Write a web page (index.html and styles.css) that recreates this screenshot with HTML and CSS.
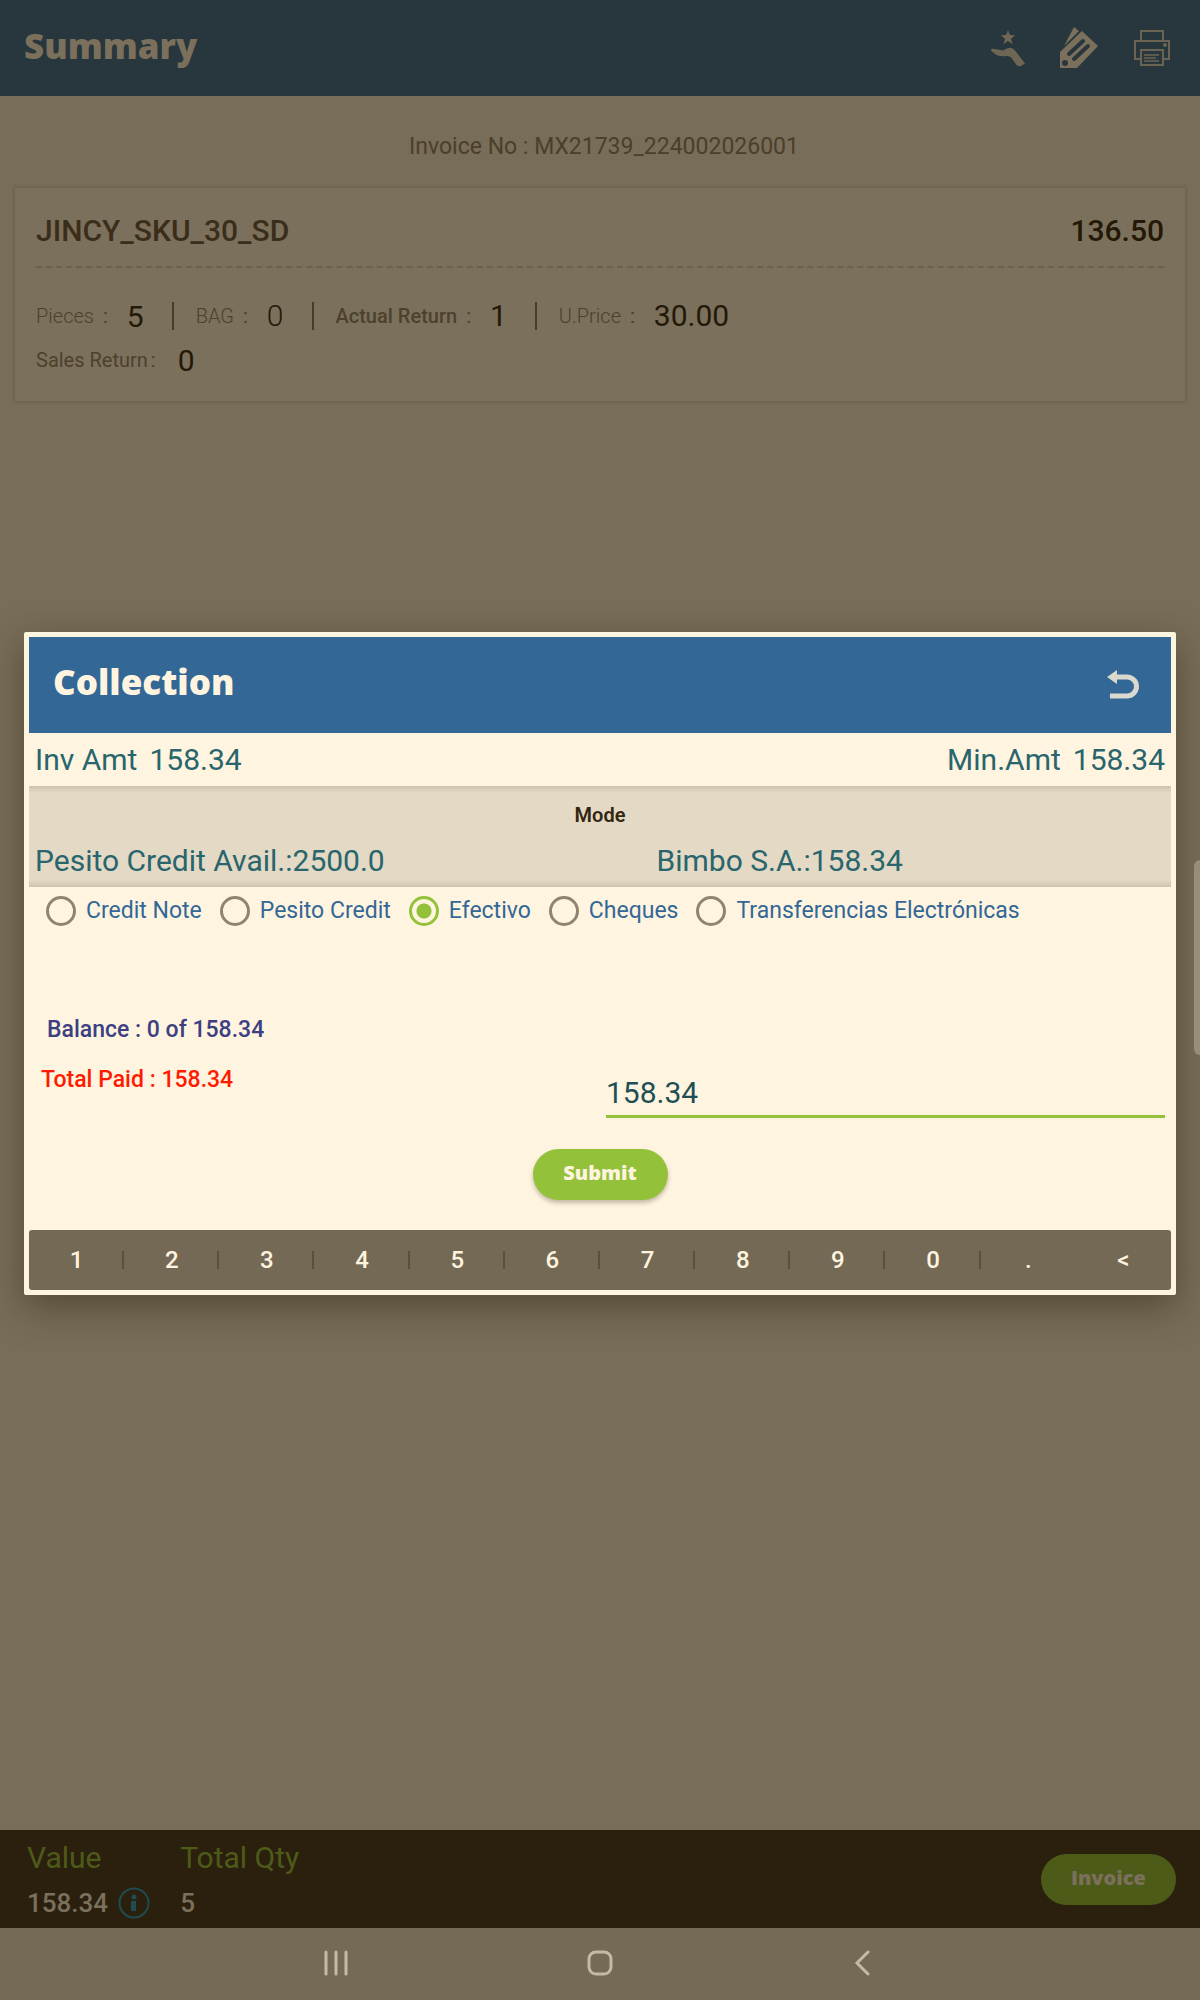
FILE: index.html
```html
<!DOCTYPE html>
<html lang="en">
<head>
<meta charset="utf-8">
<meta name="viewport" content="width=device-width, initial-scale=1">
<title>Summary</title>
<link rel="stylesheet" href="styles.css">
</head>
<body>
<div class="app">
  <header class="topbar">
    <h1 class="brand-title">Summary</h1>
    <div class="topbar-actions">
      <button class="icon-button" aria-label="Offers">
        <svg width="36" height="42" viewBox="2 0 36 42" fill="#6f6653"><path d="M19 3l2 5 5 .3-4 3.500 1.500 5.200-4.500-3-4.500 3 1.500-5.200-4-3.500 5-.3z"/><path d="M2 23q0-2 4-1l8 1.500 4-2q5-2 8 2l10 13-5 3-3-1-6-8q-2-2-5-1.500-8 1-12-3-3-1-3-3z"/></svg>
      </button>
      <button class="icon-button" aria-label="Price tags">
        <svg width="42" height="44" viewBox="0 0 42 44"><path d="M5 20L15 1l5 4-5 5z" fill="#7b705b"/><path d="M1 26L23 5l16 15-21 22H1z" fill="#7b705b"/><circle cx="6" cy="37" r="3" fill="#28363d"/><path d="M10 28L24 15M15 33L29 20" stroke="#28363d" stroke-width="4" stroke-linecap="round"/></svg>
      </button>
      <button class="icon-button" aria-label="Print">
        <svg width="38" height="38" viewBox="0 0 38 38" fill="none" stroke="#6c6452" stroke-width="2"><path d="M8 11V2h22v9M8 30H2V12h34v18h-6"/><path d="M8 21h22v15H8z"/><path d="M11 26h15M11 29h12M11 32h15" stroke-width="1.500"/><circle cx="32" cy="16" r="1"/></svg>
      </button>
    </div>
  </header>

  <main class="summary">
    <p class="invoice-no">Invoice No : MX21739_224002026001</p>
    <section class="item">
      <div class="item-head"><h2 class="item-name">JINCY_SKU_30_SD</h2><strong class="item-total">136.50</strong></div>
      <div class="facts">
        <span class="fact"><span class="fact-label thin">Pieces</span><span class="colon">:</span><span class="fact-value">5</span></span>
        <span class="fact"><span class="fact-label thin">BAG</span><span class="colon">:</span><span class="fact-value light">0</span></span>
        <span class="fact"><span class="fact-label medium">Actual Return</span><span class="colon">:</span><span class="fact-value">1</span></span>
        <span class="fact"><span class="fact-label thin">U.Price</span><span class="colon">:</span><span class="fact-value">30.00</span></span>
      </div>
      <div class="facts">
        <span class="fact tight"><span class="fact-label">Sales Return</span><span class="colon">:</span><span class="fact-value">0</span></span>
      </div>
    </section>
  </main>

  <footer class="totals">
    <div class="total">
      <span class="total-label">Value</span>
      <span class="total-value">158.34
        <svg width="32" height="32" viewBox="0 0 32 32"><circle cx="16" cy="16" r="14.500" fill="none" stroke="#1f4b52" stroke-width="2"/><circle cx="16" cy="10" r="2.500" fill="#1f4b52"/><path d="M13 14h5v10h-5z" fill="#1f4b52"/></svg>
      </span>
    </div>
    <div class="total"><span class="total-label">Total Qty</span><span class="total-value">5</span></div>
    <button class="pill pill-dim">Invoice</button>
  </footer>

  <div class="overlay">
    <section class="dialog" role="dialog" aria-labelledby="dialog-title">
      <header class="dialog-head">
        <h2 class="brand-title" id="dialog-title">Collection</h2>
        <button class="icon-button" aria-label="Back">
          <svg width="34" height="32" viewBox="0 0 34 32"><path d="M8 8h12a9 9 0 0 1 0 19H3" fill="none" stroke="#d9d9d0" stroke-width="5"/><path d="M0 8l10-7v14z" fill="#d9d9d0"/></svg>
        </button>
      </header>
      <div class="amounts">
        <span class="amount"><span>Inv Amt</span><span>158.34</span></span>
        <span class="amount"><span>Min.Amt</span><span>158.34</span></span>
      </div>
      <div class="mode">
        <h3 class="mode-title">Mode</h3>
        <div class="credits"><span>Pesito Credit Avail.:2500.0</span><span>Bimbo S.A.:158.34</span></div>
      </div>
      <div class="options">
        <label class="option"><input type="radio" name="mode">Credit Note</label>
        <label class="option"><input type="radio" name="mode">Pesito Credit</label>
        <label class="option"><input type="radio" name="mode" checked>Efectivo</label>
        <label class="option"><input type="radio" name="mode">Cheques</label>
        <label class="option"><input type="radio" name="mode">Transferencias Electrónicas</label>
      </div>
      <div class="payment">
        <div class="status"><span class="balance">Balance : 0 of 158.34</span><span class="paid">Total Paid : 158.34</span></div>
        <input class="paid-input" type="text" value="158.34" aria-label="Amount">
      </div>
      <button class="pill submit">Submit</button>
      <div class="keypad">
        <button class="key">1</button><button class="key">2</button><button class="key">3</button><button class="key">4</button><button class="key">5</button><button class="key">6</button><button class="key">7</button><button class="key">8</button><button class="key">9</button><button class="key">0</button><button class="key">.</button><button class="key">&lt;</button>
      </div>
    </section>
    <div class="edge-handle"></div>
  </div>
</div>

<nav class="sysnav">
  <button class="nav-button" aria-label="Recents"><svg width="26" height="26" viewBox="0 0 26 26" stroke="#c6baa3" stroke-width="3" stroke-linecap="round"><path d="M3 2v22M13 2v22M23 2v22"/></svg></button>
  <button class="nav-button" aria-label="Home"><svg width="26" height="26" viewBox="0 0 26 26" fill="none" stroke="#c6baa3" stroke-width="3"><rect x="2" y="2" width="22" height="22" rx="7"/></svg></button>
  <button class="nav-button" aria-label="Back"><svg width="26" height="26" viewBox="0 0 26 26" fill="none" stroke="#c6baa3" stroke-width="3" stroke-linecap="round"><path d="M17 2L6 13l11 11"/></svg></button>
</nav>
</body>
</html>
```
FILE: styles.css
```css
* { box-sizing: border-box; }

body {
  display: flex;
  flex-direction: column;
  min-height: 100vh;
  margin: 0;
  background: #786d58;
  font-family: Roboto, "Liberation Sans", sans-serif;
  font-size: 20px;
}

h1, h2, h3, p { margin: 0; }

button {
  padding: 0;
  border: 0;
  background: none;
  font: inherit;
  cursor: pointer;
}

svg { display: block; }

.app {
  position: relative;
  display: flex;
  flex: 1;
  flex-direction: column;
}

.brand-title {
  padding-bottom: 5px;
  font-family: "Open Sans", "Noto Sans", sans-serif;
  font-size: 35px;
  font-weight: 800;
  line-height: 48px;
}

.topbar {
  display: flex;
  align-items: center;
  justify-content: space-between;
  height: 96px;
  padding: 0 29px 0 24px;
  background: #28363d;
  color: #7b705b;
}

.topbar-actions {
  display: flex;
  align-items: center;
  gap: 32px;
}

.summary {
  flex: 1;
  padding: 36px 14px;
}

.invoice-no {
  padding-left: 8px;
  color: #4b3f2a;
  font-size: 23px;
  line-height: 30px;
  text-align: center;
}

.item {
  margin-top: 25px;
  padding: 22px 21px 19px;
  border: 1px solid #6f644f;
  background: #7b705b;
  box-shadow: 0 0 3px #6b604b;
}

.item-head {
  display: flex;
  justify-content: space-between;
  padding-bottom: 14px;
  border-bottom: 2px dashed #6c614c;
  margin-bottom: 26px;
  font-size: 30px;
  line-height: 42px;
}

.item-name {
  color: #3a2d19;
  font-size: inherit;
  font-weight: 500;
}

.item-total {
  color: #241807;
  font-weight: 500;
}

.facts {
  display: flex;
  align-items: center;
  height: 44px;
}

.fact {
  display: flex;
  align-items: center;
}

.fact + .fact {
  margin-left: 28px;
  padding-left: 22px;
  border-left: 2px solid #4a3d28;
  line-height: 28px;
}

.fact-label, .colon { color: #4d412c; }
.thin { font-weight: 300; }
.medium { font-weight: 500; }
.colon { margin: 0 19px 0 9px; }
.tight .colon { margin: 0 22px 0 3px; }

.fact-value {
  color: #241807;
  font-size: 30px;
}

.fact-value.light { font-weight: 300; }

.totals {
  display: flex;
  align-items: center;
  gap: 30px;
  height: 98px;
  padding: 0 24px 0 27px;
  background: #2b200e;
}

.total-label {
  display: block;
  color: #4d5b18;
  font-size: 30px;
  line-height: 48px;
}

.total-value {
  display: flex;
  align-items: center;
  gap: 10px;
  height: 42px;
  color: #7b705b;
  font-size: 26px;
  font-weight: 500;
}

.pill {
  min-width: 135px;
  height: 51px;
  padding-bottom: 4px;
  border-radius: 26px;
  background: #93c13a;
  color: #fff4e0;
  font-family: "Open Sans", "Noto Sans", sans-serif;
  font-size: 20px;
  font-weight: 800;
}

.pill-dim {
  margin-left: auto;
  background: #4d5b18;
  color: #7b705b;
}

.overlay {
  position: absolute;
  inset: 0;
  display: flex;
  align-items: center;
  padding: 0 24px 2px;
}

.dialog {
  display: flex;
  flex: 1;
  flex-direction: column;
  padding: 5px;
  border-radius: 2px;
  background: #fff4e0;
  box-shadow: 0 12px 36px rgba(50, 38, 15, .5);
}

.dialog-head {
  display: flex;
  align-items: center;
  justify-content: space-between;
  height: 96px;
  padding: 0 30px 0 24px;
  background: #336796;
  color: #fff4e0;
}

.amounts {
  display: flex;
  justify-content: space-between;
  padding: 0 6px;
  color: #28656c;
  font-size: 30px;
  line-height: 53px;
}

.amount {
  display: flex;
  gap: 12px;
}

.mode {
  padding: 13px 6px 0;
  background:
    linear-gradient(#cec2ad, #e3d9c5) top / 100% 7px no-repeat,
    linear-gradient(#e3d9c5, #cec2ad) bottom / 100% 7px no-repeat,
    #e3d9c5;
}

.mode-title {
  margin-bottom: 4px;
  color: #33260f;
  font-size: 20px;
  font-weight: 600;
  line-height: 32px;
  text-align: center;
}

.credits {
  display: grid;
  grid-template-columns: 55fr 45fr;
  color: #28656c;
  font-size: 30px;
  line-height: 52px;
}

.options {
  display: flex;
  flex-wrap: wrap;
  gap: 18px;
  padding: 9px 17px;
}

.option {
  display: flex;
  align-items: center;
  gap: 10px;
  color: #336796;
  font-size: 23px;
  line-height: 30px;
}

.option input {
  width: 30px;
  height: 30px;
  margin: 0;
  border: 3px solid #91846e;
  border-radius: 50%;
  appearance: none;
}

.option input:checked {
  border-color: #93c13a;
  background: radial-gradient(circle, #93c13a 7px, transparent 8px);
}

.payment {
  display: grid;
  grid-template-columns: 1fr 1fr;
  gap: 12px;
  align-items: end;
  padding: 80px 6px 0;
}

.status {
  display: flex;
  flex-direction: column;
  gap: 20px;
  padding: 0 6px 23px;
  font-size: 23px;
  font-weight: 500;
  line-height: 30px;
}

.balance {
  padding-left: 6px;
  color: #3d4080;
}

.paid { color: #ff1a00; }

.paid-input {
  width: 100%;
  height: 48px;
  padding: 0;
  border: 0;
  border-bottom: 3px solid #93c13a;
  outline: 0;
  background: none;
  color: #1d4f55;
  font: 30px Roboto, "Liberation Sans", sans-serif;
}

.submit {
  align-self: center;
  margin: 31px 0 30px;
  box-shadow: 0 3px 4px rgba(60, 50, 30, .3);
}

.keypad {
  display: grid;
  grid-template-columns: repeat(12, 1fr);
  height: 60px;
  border-radius: 3px;
  background: #746954;
}

.key {
  display: flex;
  align-items: center;
  justify-content: center;
  background: linear-gradient(#5c503b, #5c503b) right / 2px 18px no-repeat;
  color: #fff4e0;
  font-size: 24px;
  font-weight: 500;
}

.key:nth-last-child(-n+2) { background: none; }

.edge-handle {
  position: absolute;
  top: 860px;
  right: 0;
  width: 6px;
  height: 195px;
  border-radius: 6px 0 0 6px;
  background: #998d77;
}

.sysnav {
  display: grid;
  grid-template-columns: repeat(3, 1fr);
  height: 72px;
  padding: 0 17% 2px;
  background: #756a55;
}

.nav-button {
  display: flex;
  align-items: center;
  justify-content: center;
}
```
